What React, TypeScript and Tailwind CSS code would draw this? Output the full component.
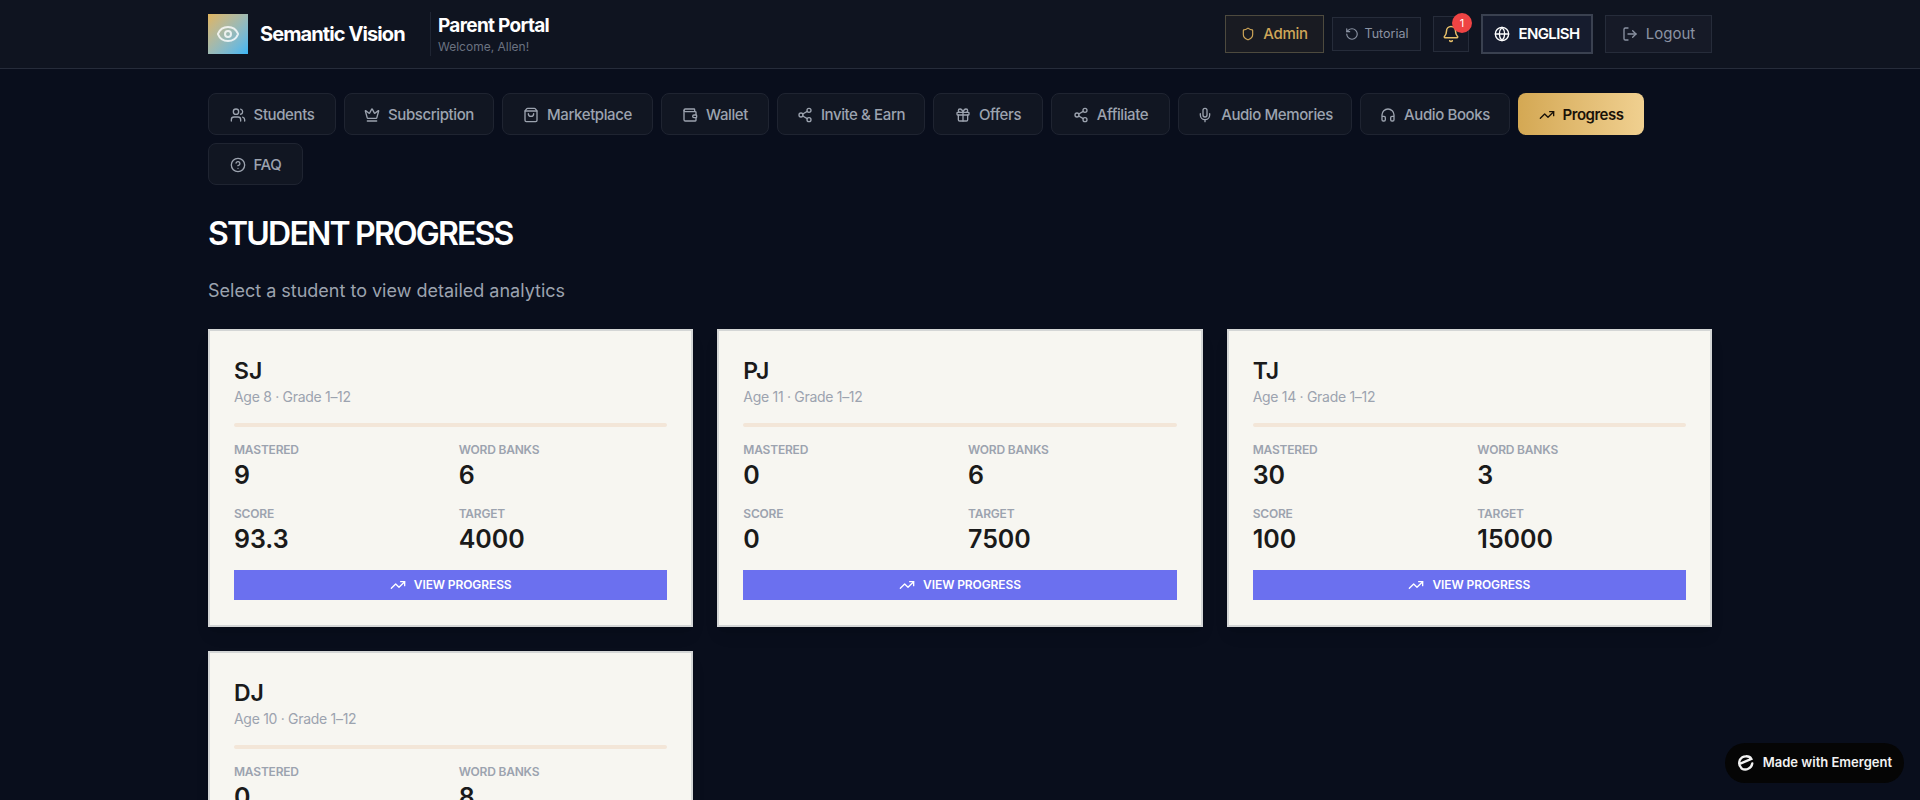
import { Bell, Crown, Eye, CircleHelp, Gift, Globe, Headphones, LogOut, Mic, RotateCcw, Share2, Shield, ShoppingBag, TrendingUp, Users, Wallet } from 'lucide-react';
import type { ComponentType } from 'react';

const FONT = { fontFamily: 'Inter, "Noto Sans", sans-serif' };

interface Tab {
  label: string;
  icon: ComponentType<{ className?: string }>;
  width: string;
  active?: boolean;
}

const tabs: Tab[] = [
  { label: 'Students', icon: Users, width: 'w-[128px]' },
  { label: 'Subscription', icon: Crown, width: 'w-[150px]' },
  { label: 'Marketplace', icon: ShoppingBag, width: 'w-[151px]' },
  { label: 'Wallet', icon: Wallet, width: 'w-[108px]' },
  { label: 'Invite & Earn', icon: Share2, width: 'w-[148px]' },
  { label: 'Offers', icon: Gift, width: 'w-[110px]' },
  { label: 'Affiliate', icon: Share2, width: 'w-[119px]' },
  { label: 'Audio Memories', icon: Mic, width: 'w-[174px]' },
  { label: 'Audio Books', icon: Headphones, width: 'w-[150px]' },
  { label: 'Progress', icon: TrendingUp, width: 'w-[126px]', active: true },
  { label: 'FAQ', icon: CircleHelp, width: 'w-[95px]' },
];

const students = [
  { name: 'SJ', age: 8, mastered: '9', banks: '6', score: '93.3', target: '4000' },
  { name: 'PJ', age: 11, mastered: '0', banks: '6', score: '0', target: '7500' },
  { name: 'TJ', age: 14, mastered: '30', banks: '3', score: '100', target: '15000' },
  { name: 'DJ', age: 10, mastered: '0', banks: '8', score: '0', target: '5000' },
];

function Stat({ label, value }: { label: string; value: string }) {
  return (
    <div className="h-[64px]">
      <div className="text-[12px] leading-[16px] font-semibold uppercase tracking-[-0.2px] text-[#9ca3af]">{label}</div>
      <div className="text-[25px] leading-[34px] font-semibold text-[#1a1a1a]">{value}</div>
    </div>
  );
}

function StudentCard({ s }: { s: (typeof students)[number] }) {
  return (
    <div className="h-[298px] border-2 border-[#d4d6d6] bg-[#f7f6f1] px-[24px] pt-[24px] shadow-lg">
      <div className="text-[23px] leading-[32px] font-semibold text-[#1a1a1a]">{s.name}</div>
      <div className="text-[14px] leading-[20px] tracking-[-0.3px] text-[#9ca3af]">Age {s.age} · Grade 1–12</div>
      <div className="mt-[16px] h-[4px] rounded-full bg-[#f3e6d8]" />
      <div className="mt-[15px] grid grid-cols-2 gap-x-[16px]">
        <Stat label="Mastered" value={s.mastered} />
        <Stat label="Word Banks" value={s.banks} />
        <Stat label="Score" value={s.score} />
        <Stat label="Target" value={s.target} />
      </div>
      <button className="flex h-[30px] w-full items-center justify-center gap-[8px] bg-[#6b70ef] text-[12px] font-semibold uppercase tracking-[-0.1px] text-white">
        <TrendingUp className="h-4 w-4" />
        View Progress
      </button>
    </div>
  );
}

export default function App() {
  return (
    <div style={FONT} className="relative h-[800px] overflow-hidden bg-[#090e1c]">
      <header className="h-[69px] border-b border-[#262c3a] bg-[#0f1420]">
        <div className="mx-auto flex h-[68px] w-[1504px] items-center justify-between">
          <div className="flex items-center">
            <div className="flex h-[40px] w-[40px] items-center justify-center bg-gradient-to-br from-[#e0b45c] to-[#38b6f5]">
              <Eye className="h-6 w-6 text-white/80" />
            </div>
            <div className="ml-[12px] w-[170px] text-[20px] font-bold tracking-[-0.9px] text-white">Semantic Vision</div>
            <div className="flex h-[44px] flex-col justify-center border-l border-[#1f2533] pl-[7px]">
              <div className="text-[19px] leading-[26px] font-bold tracking-[-0.7px] text-white">Parent Portal</div>
              <div className="text-[12px] leading-[16px] text-[#6b7280]">Welcome, Allen!</div>
            </div>
          </div>
          <div className="flex items-center gap-[12px]">
            <div className="flex items-center gap-[8px]">
              <button className="flex h-[38px] w-[99px] items-center justify-center gap-[8px] border border-[#4d4a3e] bg-[#191b22] text-[15px] font-medium tracking-[-0.3px] text-[#cfa658]">
                <Shield className="h-[14px] w-[14px]" />
                Admin
              </button>
              <button className="flex h-[34px] w-[89px] items-center justify-center gap-[6px] border border-[#262c3a] bg-[#131825] text-[12.5px] text-[#8b93a3]">
                <RotateCcw className="h-[14px] w-[14px]" />
                Tutorial
              </button>
            </div>
            <button className="relative flex h-[36px] w-[36px] items-center justify-center border border-[#262c3a] bg-[#131825] text-[#e8c06a]">
              <Bell className="h-[18px] w-[18px]" />
              <span className="absolute -top-[4px] -right-[4px] flex h-[20px] w-[20px] items-center justify-center rounded-full bg-[#ef4444] text-[11px] text-white">1</span>
            </button>
            <button className="flex h-[40px] w-[112px] items-center justify-center gap-[8px] border-2 border-[#3a4150] bg-[#161c2e] text-[15px] font-semibold tracking-[-0.6px] text-white">
              <Globe className="h-4 w-4" />
              ENGLISH
            </button>
            <button className="flex h-[38px] w-[107px] items-center justify-center gap-[8px] border border-[#262c3a] bg-[#161a27] text-[15px] text-[#8b93a3]">
              <LogOut className="h-4 w-4" />
              Logout
            </button>
          </div>
        </div>
      </header>

      <main className="mx-auto w-[1504px]">
        <nav className="flex flex-wrap gap-[8px] pt-[24px]">
          {tabs.map((t) => {
            const Icon = t.icon;
            return (
              <button
                key={t.label}
                className={
                  t.active
                    ? 'flex h-[42px] w-[126px] items-center justify-center gap-[8px] rounded-[8px] bg-gradient-to-r from-[#d4a853] to-[#f0d090] pt-[2px] text-[15px] font-semibold tracking-[-0.5px] text-[#1a1208]'
                    : `flex h-[42px] ${t.width} items-center justify-center gap-[8px] rounded-[8px] border border-[#1f2431] bg-[#111622] pt-[2px] text-[15px] font-medium tracking-[-0.4px] text-[#9ca3af]`
                }
              >
                <Icon className="h-4 w-4" />
                {t.label}
              </button>
            );
          })}
        </nav>

        <h1 className="mt-[27px] text-[32px] leading-[44px] font-semibold tracking-[-1.8px] text-white uppercase">Student Progress</h1>
        <p className="mt-[21px] text-[18px] leading-[28px] text-[#9ca3af]">Select a student to view detailed analytics</p>

        <div className="mt-[24px] grid grid-cols-3 gap-[24px]">
          {students.map((s) => (
            <StudentCard key={s.name} s={s} />
          ))}
        </div>
      </main>

      <div className="absolute right-[16px] bottom-[17px] flex h-[40px] items-center gap-[8px] rounded-full bg-[#050505] px-[12px] text-[13px] font-semibold text-[#f2f2f2]">
        <svg viewBox="0 0 20 20" className="h-[18px] w-[18px]" fill="none" stroke="currentColor" strokeWidth="2.6" strokeLinecap="round">
          <path d="M3 11 L16 5.5 C14 1.8 6 1 3.2 6.5 C1.8 10 2.5 13 4.5 15" />
          <path d="M17 10.5 C16 16 10 19 5 16" />
        </svg>
        Made with Emergent
      </div>
    </div>
  );
}
